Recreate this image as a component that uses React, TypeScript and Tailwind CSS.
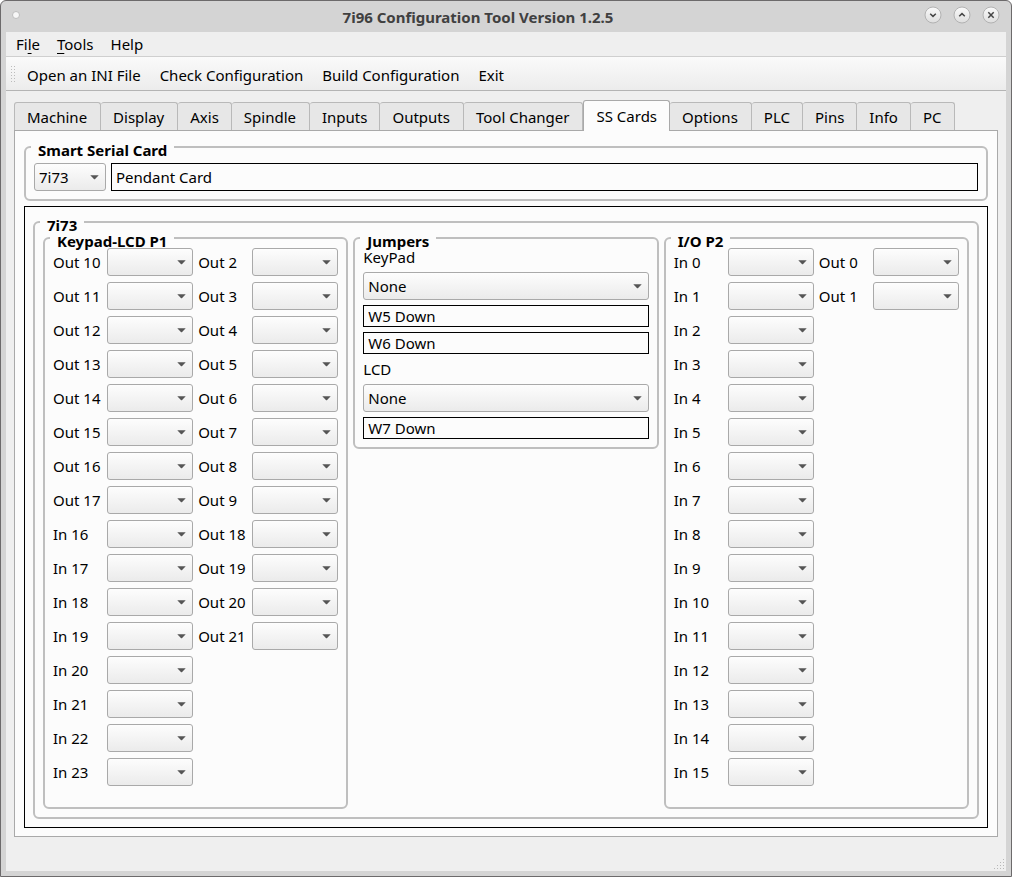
import { useState } from 'react'
import type { ReactNode } from 'react'

const tabs = [
  'Machine', 'Display', 'Axis', 'Spindle', 'Inputs', 'Outputs', 'Tool Changer',
  'SS Cards', 'Options', 'PLC', 'Pins', 'Info', 'PC',
]

const range = (prefix: string, from: number, to: number) =>
  Array.from({ length: to - from + 1 }, (_, i) => `${prefix} ${from + i}`)

const keypadLeft = [...range('Out', 10, 17), ...range('In', 16, 23)]
const keypadRight = [...range('Out', 2, 9), ...range('Out', 18, 21)]
const ioLeft = range('In', 0, 15)
const ioRight = range('Out', 0, 1)

type ComboProps = {
  id?: string
  label?: string
  options?: string[]
  className?: string
}

const Combo = ({ id, label, options = [''], className = '' }: ComboProps) => (
  <div className={`relative h-7 ${className}`}>
    <select
      id={id}
      aria-label={label}
      className="block w-full h-full appearance-none rounded-[3px] border border-[#a9a9a9] bg-linear-to-b from-[#fdfdfd] to-[#ebebeb] pl-1 pr-5 outline-none"
    >
      {options.map((option) => (
        <option key={option}>{option}</option>
      ))}
    </select>
    <svg
      className="pointer-events-none absolute right-[7px] top-3 h-[5px] w-[9px]"
      viewBox="0 0 9 5"
    >
      <path d="M0.3 0.3h8.4L4.9 4.2h-.8z" fill="#555" />
    </svg>
  </div>
)

type GroupProps = {
  title: string
  className?: string
  children: ReactNode
}

const Group = ({ title, className = '', children }: GroupProps) => (
  <fieldset className={`min-w-0 rounded-md border-2 border-[#bfbfbf] px-2 ${className}`}>
    <legend className="-ml-[3px] h-[2px] px-[7px] font-bold leading-[9px] whitespace-nowrap">{title}</legend>
    {children}
  </fieldset>
)

type PinGridProps = {
  name: string
  left: string[]
  right: string[]
}

const PinGrid = ({ name, left, right }: PinGridProps) => (
  <div className="grid grid-cols-2 gap-x-[5px] pt-[9px] pb-[21px]">
    {[left, right].map((pins, column) => (
      <div key={column} className="flex flex-col gap-1.5">
        {pins.map((pin) => {
          const id = `${name}-${pin.replace(' ', '-').toLowerCase()}`
          return (
            <div key={pin} className="flex items-center justify-between">
              <label htmlFor={id} className="whitespace-nowrap">{pin}</label>
              <Combo id={id} className="w-[86px]" />
            </div>
          )
        })}
      </div>
    ))}
  </div>
)

const Readout = ({ label, value, className = '' }: { label: string; value: string; className?: string }) => (
  <input
    readOnly
    aria-label={label}
    value={value}
    className={`min-w-0 border border-black bg-transparent px-1 outline-none ${className}`}
  />
)

const windowButtons = [
  { label: 'Minimize', path: 'M6.2 7.8 9 10.4l2.8-2.6' },
  { label: 'Maximize', path: 'M6.2 10.2 9 7.6l2.8 2.6' },
  { label: 'Close', path: 'M6.3 6.3l5.4 5.4M11.7 6.3l-5.4 5.4' },
]

const TitleBar = () => (
  <header className="flex h-[31px] items-center px-1.5">
    <span className="mb-1 size-2 rounded-full border border-[#bdbdbd] bg-[#f7f7f7]" />
    <h1 className="flex-1 pl-3 text-center font-bold text-[#404040]">7i96 Configuration Tool Version 1.2.5</h1>
    <div className="mb-1 flex gap-[11px]">
      {windowButtons.map(({ label, path }) => (
        <button key={label} type="button" aria-label={label}>
          <svg className="block size-[18px]" viewBox="0 0 18 18">
            <defs>
              <linearGradient id={`shade-${label}`} x2="0" y2="1">
                <stop stopColor="#fafafa" />
                <stop offset="1" stopColor="#dedede" />
              </linearGradient>
            </defs>
            <circle cx="9" cy="9" r="8" fill={`url(#shade-${label})`} stroke="#b2b2b2" />
            <path d={path} fill="none" stroke="#444" strokeWidth="1.5" />
          </svg>
        </button>
      ))}
    </div>
  </header>
)

const Jumpers = () => (
  <div className="flex flex-col gap-[5px] pt-2 pb-2">
    <label htmlFor="keypad-jumper" className="h-5 leading-5">KeyPad</label>
    <Combo id="keypad-jumper" options={['None']} />
    <Readout label="Jumper W5" value="W5 Down" className="h-[22px]" />
    <Readout label="Jumper W6" value="W6 Down" className="h-[22px]" />
    <label htmlFor="lcd-jumper" className="h-5 leading-5">LCD</label>
    <Combo id="lcd-jumper" options={['None']} />
    <Readout label="Jumper W7" value="W7 Down" className="h-[22px]" />
  </div>
)

const App = () => {
  const [active, setActive] = useState('SS Cards')

  return (
    <div className="flex min-h-screen flex-col rounded-t-md border border-[#6c6a6b] bg-[#d4d4d4] px-[5px] pb-[5px] font-['Noto_Sans',sans-serif] text-[15px] leading-5 text-black">
      <TitleBar />
      <div className="flex flex-1 flex-col bg-[#efefef]">
        <nav className="flex h-[25px] items-center gap-[17px] border-b border-[#cfcfcf] px-2.5">
          <button type="button">Fi<span className="underline underline-offset-3">l</span>e</button>
          <button type="button"><span className="underline underline-offset-3">T</span>ools</button>
          <button type="button">Help</button>
        </nav>
        <div className="flex h-[34px] items-center border-b border-[#b4b4b4] bg-linear-to-b from-[#fafafa] to-[#ececec] pl-1">
          <svg className="mr-[7px] h-[18px] w-[6px]" viewBox="0 0 6 18" fill="#bcbcbc">
            {[1, 4, 7, 10, 13, 16].map((y) => (
              <g key={y}>
                <rect x="1" y={y} width="1" height="1" />
                <rect x="4" y={y} width="1" height="1" />
              </g>
            ))}
          </svg>
          <div className="flex gap-[19px] pt-0.5 pl-1">
            <button type="button">Open an INI File</button>
            <button type="button">Check Configuration</button>
            <button type="button">Build Configuration</button>
            <button type="button">Exit</button>
          </div>
        </div>

        <div className="flex flex-1 flex-col px-2 pt-[9px]">
          <div role="tablist" className="flex h-[30px] items-end">
            {tabs.map((tab, i) => (
              <button
                key={tab}
                type="button"
                role="tab"
                aria-selected={tab === active}
                onClick={() => setActive(tab)}
                className={
                  tab === active
                    ? 'relative -mb-px h-[31px] rounded-t-[3px] border border-b-0 border-[#a9a9a9] bg-[#fcfcfc] px-3 whitespace-nowrap'
                    : `h-7 rounded-t-[3px] border-t border-r border-[#b9b9b9] bg-[#e7e7e7] pt-px pl-3 whitespace-nowrap ${i === 0 ? 'border-l' : ''} ${tab.length > 6 ? 'pr-[13px]' : 'pr-3'}`
                }
              >
                {tab}
              </button>
            ))}
          </div>

          <main className="border border-[#a9a9a9] bg-[#fcfcfc] px-[9px] pt-[15px] pb-2">
            <Group title="Smart Serial Card" className="pb-2">
              <div className="flex gap-[5px] pt-[15px]">
                <Combo label="Smart Serial Card" options={['7i73']} className="w-[72px]" />
                <Readout label="Card type" value="Pendant Card" className="h-7 flex-1" />
              </div>
            </Group>

            <section className="mt-[5px] border border-black px-2 pt-[14px] pb-2">
              <Group title="7i73" className="pb-2">
                <div className="grid grid-cols-3 items-start gap-[5px] pt-[14px]">
                  <Group title="Keypad-LCD P1">
                    <PinGrid name="keypad" left={keypadLeft} right={keypadRight} />
                  </Group>
                  <Group title="Jumpers">
                    <Jumpers />
                  </Group>
                  <Group title="I/O P2">
                    <PinGrid name="io" left={ioLeft} right={ioRight} />
                  </Group>
                </div>
              </Group>
            </section>
          </main>

          <footer className="-mr-2 flex flex-1 items-end justify-end">
            <svg className="size-3" viewBox="0 0 12 12" fill="#b8b8b8">
              {[[9, 0], [6, 3], [9, 3], [3, 6], [6, 6], [9, 6], [0, 9], [3, 9], [6, 9], [9, 9]].map(([x, y]) => (
                <rect key={`${x}-${y}`} x={x} y={y} width="1" height="1" />
              ))}
            </svg>
          </footer>
        </div>
      </div>
    </div>
  )
}

export default App
